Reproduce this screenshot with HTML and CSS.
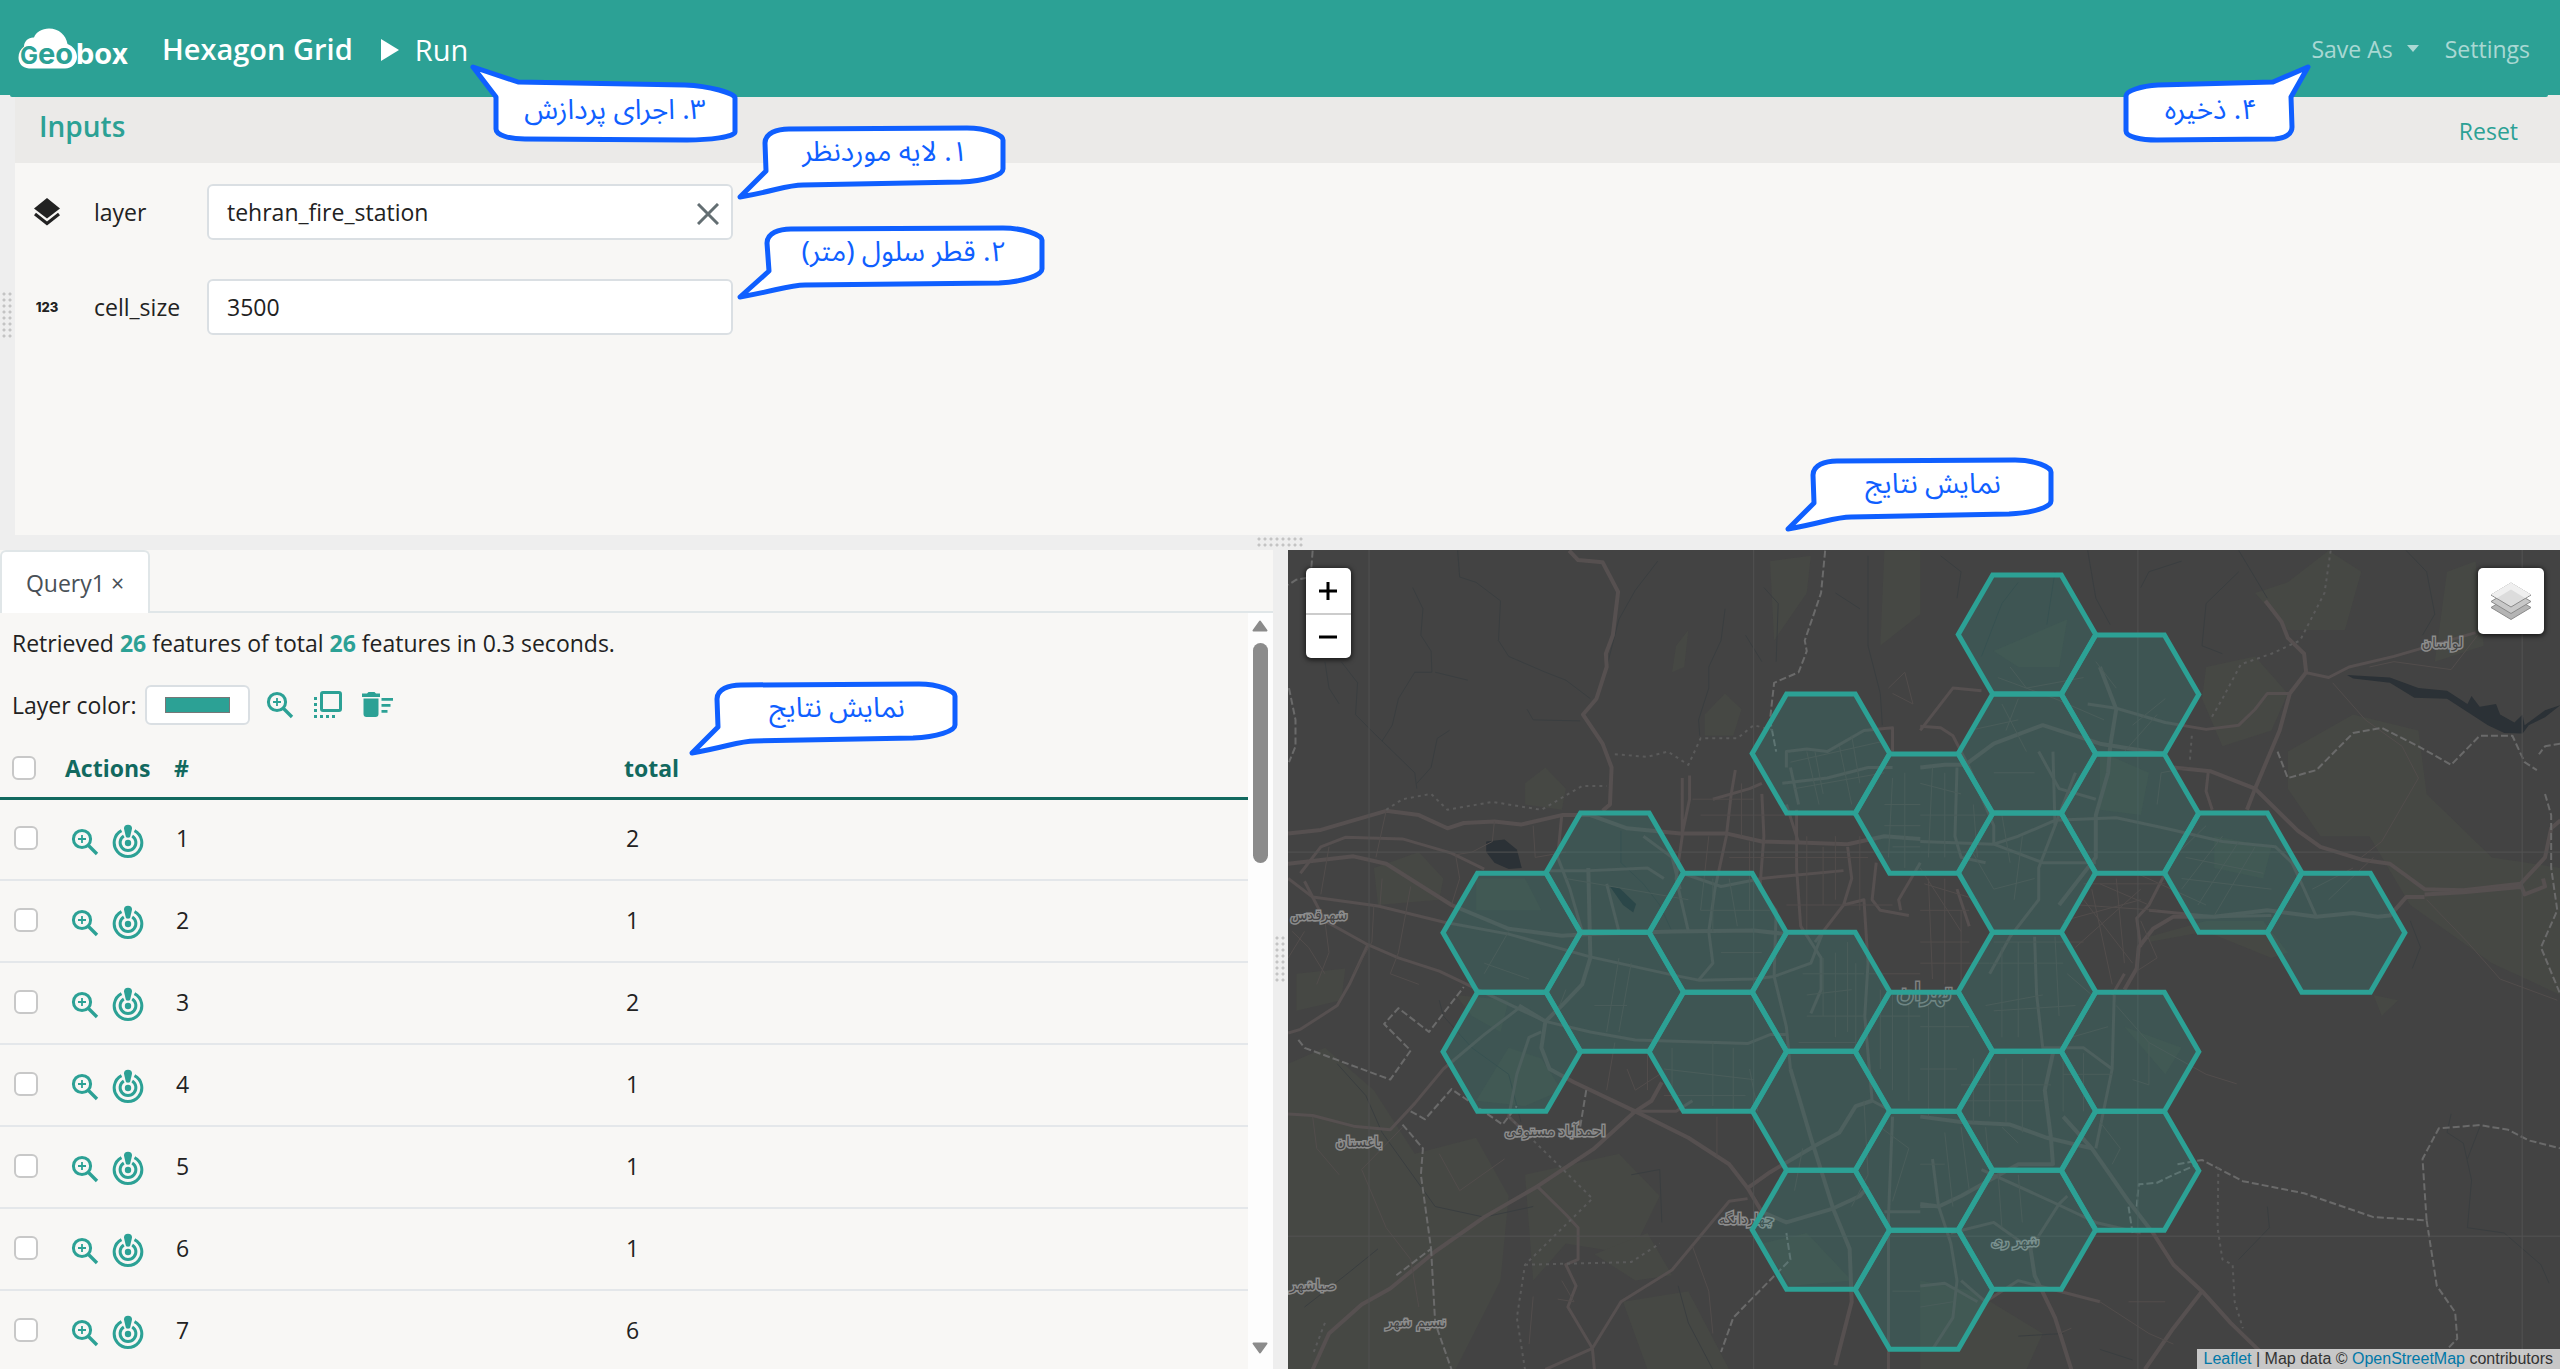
FILE: index.html
```html
<!DOCTYPE html>
<html lang="en">
<head>
<meta charset="utf-8">
<title>Hexagon Grid</title>
<link rel="stylesheet" href="styles.css">
</head>
<body>
<svg class="symbols" aria-hidden="true">
  <symbol id="zoom-in" viewBox="0 0 28 28">
    <g fill="none" stroke="currentColor"><circle cx="11" cy="11" r="8.6" stroke-width="3"/><path d="M17.5 17.5 26 26" stroke-width="3.4"/><path d="M11 7v8M7 11h8" stroke-width="1.8"/></g>
  </symbol>
  <symbol id="target" viewBox="0 0 32 36">
    <g fill="none" stroke="currentColor" stroke-width="3"><path d="M9.5 6.6A13.8 13.8 0 1 0 22.5 6.6"/><path d="M11.8 12A7.9 7.9 0 1 0 20.2 12"/></g>
    <circle cx="16" cy="19" r="3.2" fill="currentColor"/>
    <path d="M16 .8c2.600 0 4.200 1.600 4 4L18.200 12.500c-.5 1.600-3.900 1.600-4.400 0L12 4.800C11.800 2.400 13.400.8 16 .8z" fill="currentColor"/>
  </symbol>
</svg>

<header class="topbar">
  <svg class="logo" viewBox="0 0 112 42" role="img" aria-label="Geobox">
    <path fill="#fff" d="M11 40.500C4 40 .5 35 .5 29.500.5 25 2.500 21 6 18.500 6 13 11 9 16 9.500 18 4 24 .5 31 .5 41 .5 48 7 49.500 16 55 18 59 23 59 29 59 35 54 40.500 47 40.500z"/>
    <text class="logo-in" x="2" y="36"><tspan class="logo-cap">G</tspan>e<tspan>o</tspan></text>
    <text class="logo-out" x="58" y="36">box</text>
  </svg>
  <h1>Hexagon Grid</h1>
  <button class="run"><svg width="18" height="22" viewBox="0 0 18 22" aria-hidden="true"><path fill="#fff" d="M0 0 18 11 0 22z"/></svg>Run</button>
  <nav>
    <button class="save">Save As <span class="caret"></span></button>
    <a href="#settings">Settings</a>
  </nav>
</header>

<main>
  <section class="inputs">
    <div class="gutter side"><i class="grip tall"></i></div>
    <div class="inputs-panel">
      <div class="inputs-head"><h2>Inputs</h2><button>Reset</button></div>
      <form>
        <div class="field">
          <svg class="field-icon" viewBox="0 0 28 28" aria-hidden="true"><path fill="#222" d="M14 0 27 10.500 14 20.500 1 10.500z"/><path d="M2 16 14 25.500 26 16" fill="none" stroke="#222" stroke-width="3.200"/></svg>
          <label for="layer">layer</label>
          <div class="control">
            <input id="layer" type="text" value="tehran_fire_station">
            <button type="button" class="clear" aria-label="Clear"><svg width="22" height="22" viewBox="0 0 22 22"><path d="M1 1 21 21M21 1 1 21" stroke="#636e72" stroke-width="3"/></svg></button>
          </div>
        </div>
        <div class="field">
          <span class="field-icon digits">123</span>
          <label for="cell">cell_size</label>
          <div class="control"><input id="cell" type="text" value="3500"></div>
        </div>
      </form>
    </div>
  </section>
  <div class="gutter across"><i class="grip wide"></i></div>
  <section class="results">
    <div class="query">
      <div class="tabs"><button class="tab">Query1 <span>×</span></button></div>
      <div class="query-body">
        <div class="query-content">
          <p class="summary">Retrieved <b>26</b> features of total <b>26</b> features in 0.3 seconds.</p>
          <div class="tools">
            <label for="color">Layer color:</label>
            <input type="color" id="color" value="#2ca195">
            <button aria-label="Zoom to layer"><svg width="28" height="28"><use href="#zoom-in"/></svg></button>
            <button aria-label="Bring to front"><svg width="28" height="28" viewBox="0 0 28 28"><rect x="7.500" y="1.500" width="19" height="18" rx="1.500" fill="none" stroke="currentColor" stroke-width="3"/><path d="M1.500 6v21M0 25.500h23" fill="none" stroke="currentColor" stroke-width="3" stroke-dasharray="3 3"/></svg></button>
            <button aria-label="Clear results"><svg width="32" height="28" viewBox="0 0 32 28"><path fill="currentColor" d="M0 2.500h5L6.500 1h6L14 2.500h4V6H0zM1.500 7.500H16.500V23a3 3 0 0 1-3 3H4.500a3 3 0 0 1-3-3zM19.500 7H31v2.800H19.500zM19.500 13h9v2.800h-9zM19.500 19h6v2.800h-6z"/></svg></button>
          </div>
          <table>
            <colgroup><col class="c-check"><col class="c-actions"><col class="c-num"><col></colgroup>
            <thead><tr><th><input type="checkbox" aria-label="Select all"></th><th>Actions</th><th>#</th><th>total</th></tr></thead>
            <tbody>
              <tr><td><input type="checkbox" aria-label="Select 1"></td><td><button aria-label="Zoom"><svg width="28" height="28"><use href="#zoom-in"/></svg></button><button aria-label="Locate"><svg width="32" height="36"><use href="#target"/></svg></button></td><td>1</td><td>2</td></tr>
              <tr><td><input type="checkbox" aria-label="Select 2"></td><td><button aria-label="Zoom"><svg width="28" height="28"><use href="#zoom-in"/></svg></button><button aria-label="Locate"><svg width="32" height="36"><use href="#target"/></svg></button></td><td>2</td><td>1</td></tr>
              <tr><td><input type="checkbox" aria-label="Select 3"></td><td><button aria-label="Zoom"><svg width="28" height="28"><use href="#zoom-in"/></svg></button><button aria-label="Locate"><svg width="32" height="36"><use href="#target"/></svg></button></td><td>3</td><td>2</td></tr>
              <tr><td><input type="checkbox" aria-label="Select 4"></td><td><button aria-label="Zoom"><svg width="28" height="28"><use href="#zoom-in"/></svg></button><button aria-label="Locate"><svg width="32" height="36"><use href="#target"/></svg></button></td><td>4</td><td>1</td></tr>
              <tr><td><input type="checkbox" aria-label="Select 5"></td><td><button aria-label="Zoom"><svg width="28" height="28"><use href="#zoom-in"/></svg></button><button aria-label="Locate"><svg width="32" height="36"><use href="#target"/></svg></button></td><td>5</td><td>1</td></tr>
              <tr><td><input type="checkbox" aria-label="Select 6"></td><td><button aria-label="Zoom"><svg width="28" height="28"><use href="#zoom-in"/></svg></button><button aria-label="Locate"><svg width="32" height="36"><use href="#target"/></svg></button></td><td>6</td><td>1</td></tr>
              <tr><td><input type="checkbox" aria-label="Select 7"></td><td><button aria-label="Zoom"><svg width="28" height="28"><use href="#zoom-in"/></svg></button><button aria-label="Locate"><svg width="32" height="36"><use href="#target"/></svg></button></td><td>7</td><td>6</td></tr>
            </tbody>
          </table>
        </div>
        <div class="scrollbar" aria-hidden="true">
          <svg width="16" height="12" viewBox="0 0 16 12"><path d="M8 1.500 14.500 10.500h-13z" fill="#8b8b8b" stroke="#8b8b8b" stroke-width="2" stroke-linejoin="round"/></svg>
          <i class="thumb"></i>
          <svg width="16" height="12" viewBox="0 0 16 12"><path d="M8 10.500 1.500 1.500h13z" fill="#8b8b8b" stroke="#8b8b8b" stroke-width="2" stroke-linejoin="round"/></svg>
        </div>
      </div>
    </div>
    <div class="gutter between"><i class="grip tall"></i></div>
    <div class="map">
      <svg class="tiles" viewBox="0 0 1272 819" preserveAspectRatio="xMinYMin slice" role="img" aria-label="Map of Tehran">
        <defs><path id="grid-cell" d="M0 59.500 34.400 0H103L137.400 59.500 103 119H34.400z"/></defs>
        <rect width="1272" height="819" fill="#434343"/>
        <!-- west half -->
        <g class="geo" transform="matrix(.4082 0 0 .5288 -8 -10)">
          <g class="land">
            <path d="M20 990 110 960 230 1040 330 1160 480 1130 560 1240 540 1400 430 1568H20z"/>
            <path d="M230 620 340 590 400 640 390 680 240 690zM600 460 650 430 700 470 690 510 600 500zM1040 330 1090 290 1130 320 1110 370 1040 370zM970 200 1000 170 990 240 960 250z"/>
            <path d="M480 640 600 640 640 700 480 700zM430 860 560 870 540 930 470 900zM560 960 640 980 690 1040 600 1070 480 1060zM600 1200 830 1160 930 1240 860 1350 700 1330 620 1400zM1180 1330 1290 1310 1400 1400 1250 1410zM840 1440 1000 1420 1100 1568H900zM40 820 160 810 150 870 40 890z"/>
            <path d="M770 1350 900 1310 960 1390 870 1400zM1200 40 1300 30 1290 100 1210 190zM1480 20H1568V140L1470 200z"/>
          </g>
          <g class="water">
            <path d="M505 570 550 566 580 585 592 620 560 622 525 610 505 590z"/>
            <path d="M808 655 830 657 872 688 865 704 840 690z"/>
          </g>
          <g class="stream">
            <path d="M435 20 440 70 480 80 540 115 535 190 560 220 650 250 700 265 760 300M925 40 870 95 830 150 800 240M325 90 350 130 345 180 370 210 372 250 330 250 290 300 275 350 250 380M380 250 460 265M110 230 120 280 145 310M150 230 190 270 185 330 230 365 330 440 335 470M415 360 385 375 370 430 335 460M605 320 620 340 735 342M1090 130 1080 190 1050 240 1050 280 1025 340 1028 370M1140 180 1180 230M1185 90 1220 120 1215 230M1440 30 1440 200 1470 290 1475 350M1360 100 1420 130"/>
            <path d="M390 870 400 900 470 960 560 1010 590 1100M140 990 210 1050 250 1120 380 1260 500 1280 620 1260M860 1200 930 1190 935 1290M60 1450 160 1390 240 1340M835 550 835 610 890 650 930 690 960 740M975 1410 1000 1480 1060 1568"/>
          </g>
          <g class="road r5">
            <path d="M708 20 730 38 790 42 828 98 815 180 798 215 800 240 775 300 742 330 790 385 812 430 808 500 790 512"/>
            <path d="M20 612 180 598 260 612 420 690 560 735 690 748 760 745 960 740 1160 738 1240 745"/>
            <path d="M80 1568 120 1500 200 1445 270 1415 380 1345 500 1280 630 1222 770 1150 870 1080 910 1060 935 1025"/>
            <path d="M585 880 650 910 640 960 660 1000 720 1025 870 1080 1000 1130 1100 1180 1145 1225 1180 1270 1240 1290 1350 1265 1420 1240 1440 1222M755 620 760 790 740 840 690 880 650 910"/>
            <path d="M1145 1225 1200 1195 1310 1145 1370 1120 1410 1070 1450 1060M1250 1000 1300 1130 1355 1265 1395 1340 1400 1440 1360 1560"/>
            <path d="M20 555 100 548 180 530 260 512 340 520 410 545 450 535 525 532 590 538 690 520 760 520 850 545 980 555 1095 555 1180 570 1270 572 1390 575 1480 560 1568 565"/>
          </g>
          <g class="road r3">
            <path d="M20 640 80 675 240 692 400 722 560 745 760 788 960 822 1025 832 1160 830 1210 825 1300 800 1330 740"/>
            <path d="M50 630 100 580 160 562 300 565 420 592 500 622M60 645 110 720 215 765 290 790 390 815 485 850 650 910 760 930 870 945 1145 952 1200 935 1240 935"/>
            <path d="M20 932 50 925 140 880 170 840 215 765M20 1085 80 1088 180 1108 270 1115 330 1065 400 1000 500 935 585 885M985 450 985 560 970 640 1000 740M1003 445 1003 490 985 555M1115 435 1105 480 1093 560 1065 660 1050 740 1060 800 1025 832"/>
            <path d="M985 630 1080 655 1180 640 1240 635 1380 625M1180 480 1185 560 1175 660 1215 700 1210 825 1240 920 1250 1000M1265 510 1265 620 1275 730 1325 790 1325 850 1300 895M1390 580 1400 640 1380 690 1310 760M1240 500 1270 572M1380 690 1430 680 1440 800 1432 900 1450 1060 1500 1080"/>
            <path d="M630 1222 700 1275 730 1300 730 1360 700 1370 725 1410 705 1450 765 1528 770 1568M765 1528 835 1440 960 1380 1100 1250 1145 1245M765 1528 650 1568M860 1080 910 1080 970 1080 1010 1060M600 1120 560 1090 580 1010 610 940 640 930"/>
            <path d="M1240 430 1240 400 1290 395 1340 400 1430 360 1500 355 1500 400M1230 460 1340 450 1440 430 1500 430M1270 500 1250 430M1180 460 1150 470 1060 490M1520 700 1515 680 1568 610M1460 610 1450 680 1470 700 1540 710M1480 1270 1568 1270M1500 1090 1490 1280 1490 1568"/>
            <path d="M690 520 680 600 710 660 740 740M660 625 760 625 900 620 940 640M800 650 830 740M890 560 960 600 980 660"/>
          </g>
          <g class="road r1">
            <path d="M260 512 235 600M620 540 625 600 700 590M525 532 520 570 470 590 430 595 440 640 420 690M320 655 290 780M250 640 245 690M230 690 225 760 180 820M60 740 20 790M110 720 120 780 90 840M30 740 70 770 110 820M290 780 270 820 340 840M100 670 120 580"/>
            <path d="M1010 490H1160M1030 520H1250M1130 460V560M1150 570V700M1050 560 1030 700M1100 600H1260M1190 600H1440M1290 560V740M1330 580V690M1360 560V680M1240 690H1500M1420 560V700M1310 400 1330 480M1370 390 1400 500M1290 400 1320 500M1250 420 1480 380M1260 470 1480 440M1400 370 1420 460"/>
            <path d="M1060 640V740M1100 640 1120 730M1030 700H1200M1080 780H1180M1290 860 1400 850M1330 790V900M1360 780V940M1390 760V930M1410 800V960M1280 820H1430M1290 900H1430M1270 950H1410M1440 820H1568M1450 900H1568M1470 850V1000M1500 860V1040M1540 860V1060"/>
            <path d="M830 790 800 930M860 800 830 930M770 880H850M700 850 680 890M900 960V1040M940 1000 1160 1020M960 960V1060M1060 950V1070M1110 960V1080M940 1050H1140M820 950 800 1040M850 1000 870 1040 930 1010M1070 1090 1070 1165M1150 1000 1170 1080M620 1430 610 1520M1010 1335 1050 1420 1060 1500M680 1435 720 1440 690 1400"/>
            <path d="M80 1090 90 1150 145 1200M390 1160 440 1230 550 1170M300 1110 200 1190 260 1300 320 1360 340 1450M500 800 610 830M560 740 500 820M700 640 1000 680M1500 450 1490 600M1530 440V620M1480 500H1568M1480 540H1568M1500 580H1568M1490 280 1530 250 1550 310 1500 290M1470 1110 1540 1150 1500 1250M1500 1420H1568M1430 1060 1440 1200 1400 1260M1280 1150 1260 1230"/>
          </g>
          <g class="border">
            <path d="M80 20 75 70 40 75 20 85M22 280 38 340 38 390 22 420M1335 20 1325 100 1285 190 1290 210 1270 250 1210 270 1200 340 1215 400M45 945 60 960 270 1020 320 965 255 915 290 885 365 930 450 845M320 1080 355 1095 420 1038 545 1105 580 1070M300 1105 350 1150 345 1200 370 1340 285 1390M370 1340 380 1480 420 1568M750 1040 735 1110M1240 1310 1250 1360 1110 1470 1080 1535"/>
          </g>
          <g class="border dim">
            <path d="M260 510 300 490 370 480 410 510 520 495 640 510 740 465 800 465M820 405 900 410 950 400 1000 425 1030 375 1120 375 1160 350 1210 360M560 1090 680 1180 765 1245 600 1370 580 1470 600 1568M600 1370 860 1365 930 1330M110 1480 80 1540"/>
          </g>
          <path class="seam" d="M218 0V1568M1160 0V1568M0 590H1568M0 1316H1568"/>
        </g>
        <!-- east half -->
        <g class="geo" transform="matrix(.4082 0 0 .5288 632 -10)">
          <g class="land">
            <path d="M700 240 820 220 900 290 860 360 740 390 690 300zM820 100 900 170 1040 170 1080 60 1000 20 900 80zM900 400 1060 330 1220 360 1240 480 1400 600 1568 620V860L1400 800 1200 690 1100 560 980 560 900 470z"/>
            <path d="M1290 60 1360 40 1380 200 1260 230zM720 560 860 580 840 640 720 620zM560 750 700 720 840 720 900 780 860 790 700 740 560 760zM440 400 560 440 540 520 440 510zM1110 860 1170 870 1130 900zM0 1400 130 1420 300 1500 260 1568H0zM180 210 360 150 340 240 240 240zM500 920 640 960 600 1010z"/>
          </g>
          <path class="water" d="M1045 255 1150 260 1220 280 1290 285 1340 310 1350 295 1370 315 1410 310 1420 330 1455 345 1475 330 1480 350 1530 322 1568 312 1530 335 1490 350 1475 366 1430 365 1390 350 1340 325 1290 300 1210 298 1150 270 1060 262z"/>
          <g class="stream">
            <path d="M410 20 430 110 465 160M330 60 310 160M240 80 200 120 150 220M640 40 560 60 540 90M780 20 850 110M780 60 700 120 690 200 740 215M1190 20 1240 60 1260 140 1230 180M1300 1085 1290 1120 1330 1140 1350 1210 1340 1300 1430 1310 1520 1370 1540 1405M1370 1110 1340 1170M850 1260 855 1300 780 1360M1200 720 1225 770 1205 810M50 30 100 60 90 110M350 1500 240 1505M440 1530 520 1550"/>
          </g>
          <g class="road r5">
            <path d="M845 115 885 155 900 185 940 215 945 250 905 290 880 360 820 470 800 510"/>
            <path d="M620 430 710 437 820 470 925 550 980 580 1085 605 1150 612 1235 660 1330 662 1470 650 1530 600 1545 545 1568 530M1235 675 1190 675 1150 710 1120 712 1060 705 970 712 850 700 720 712 620 712 570 735 535 770 530 810 500 850"/>
            <path d="M1235 670 1330 666 1470 656M1470 650 1480 670 1530 655 1525 640"/>
            <path d="M0 430 60 425 110 425 180 385 300 350 440 385 600 405M440 240 480 320 465 390 460 440 430 520 430 600 340 690"/>
            <path d="M350 1090 420 1150 510 1250 570 1310 620 1370 690 1420 760 1480 840 1540M0 1090 100 1100 220 1105 310 1130 420 1150M325 970 305 1040 320 1130 325 1180 240 1180 100 1240 45 1260 0 1255"/>
            <path d="M270 1340 280 1390 330 1470 370 1568M690 1420 620 1490 550 1568"/>
          </g>
          <g class="road r3">
            <path d="M0 352 50 355 80 370 120 430 180 540 180 575 300 610 430 610M90 430 85 560 100 600 160 610M0 570 180 575 240 560 330 530 480 525 600 545 740 570 870 580 910 610 940 660 970 712M325 400 330 540 290 620 290 680 220 750 170 820"/>
            <path d="M410 310 480 318 600 345 700 358 780 350 820 320 850 290 905 290M705 440 700 475 715 510M940 250 1000 260 1050 240 1160 220 1360 175M380 440 330 540M600 630 560 690 530 715 540 770M470 860 500 820M475 860 470 1000 430 1150M280 750 285 860 300 960 400 960 470 1000M290 400 340 470 430 490"/>
            <path d="M0 1260 45 1260 75 1330 90 1400 80 1470 30 1530M75 1310 180 1290 270 1340 340 1255 360 1240M150 1190 320 1250 430 1290 540 1310M100 1400 160 1440 240 1400 440 1440M30 1170 45 1260M0 1410 60 1405 140 1440M560 700 720 712 860 710M90 660 120 730M0 360 80 280 150 285"/>
          </g>
          <g class="road r1">
            <path d="M190 260 330 300 450 340M200 310 260 400M220 240 260 280 400 260M430 230 480 280M520 350 600 300M500 400 580 330M120 360 240 340M180 440 280 440M240 300 210 360M0 460 100 480M30 430 20 600M60 440V600M0 520 160 520M130 500 140 600M120 580 180 660 280 640M200 520 220 610M250 560 230 680"/>
            <path d="M620 600 700 540M640 660 740 560M680 690 780 570M720 710 820 580M650 600 840 630M640 640 860 660M1000 680 1110 600M960 660 1060 620M580 500 590 440 660 430M350 720 540 680M380 770 540 660M400 680 520 800M420 660 470 840M440 650 560 690M480 640 500 800M400 650 600 650M390 690 580 700M540 720 580 790 530 815"/>
            <path d="M0 620 100 740M10 650 140 680M20 640 30 830M60 640V840M100 700V850M0 700H120M0 760H120M0 800H170M180 760H400M170 800H350M160 880 300 860M200 770V940M240 760V940M330 750 340 900M360 820 420 860M370 940 460 920M180 890 380 880"/>
            <path d="M20 880V1090M60 860V1080M0 920H120M0 1000H90M130 980V1100M170 970V1090M210 980V1100M250 980V1120M100 1030H320M110 1060H300M350 980V1080M400 970V1080M60 1120 80 1260M100 1110 120 1230M160 1110 170 1190M200 1110 240 1140M0 1180H60M190 1190 200 1300M240 1200 250 1290M350 1010H470M480 880 560 950 700 1010 775 1028M560 950V1030L520 1020M440 1100 490 1150 470 1180"/>
            <path d="M1100 240 1160 230 1300 245 1365 180M1010 270 1090 340 1180 390 1220 450 1130 570 1080 600M1240 680 1340 760 1420 830 1560 870M530 630 700 690M0 1450 80 1440M340 1500 370 1490M620 1520 560 1500 440 1440M510 1440 600 1440"/>
          </g>
          <g class="border">
            <path d="M875 400 900 450 970 435 1060 365 1130 355 1220 390 1300 425 1370 370 1450 370 1480 420 1510 435M1568 385 1530 390 1515 405M1530 480 1545 520 1545 620 1560 700 1520 770 1568 860M630 1180 690 1172 790 1212 940 1235 1110 1280 1240 1286 1230 1170 1270 1112 1370 1106 1440 1115 1490 1135 1568 1150M1240 1286 1265 1410 1310 1460 1315 1510 1290 1530M530 1260 535 1218 580 1215 620 1200 680 1180M510 1260 520 1310"/>
          </g>
          <g class="border dim">
            <path d="M1005 20 990 100 930 190 860 215 785 235 740 300 710 340M665 370 660 420M730 1185 728 1300 740 1360 765 1370 770 1440 790 1490"/>
          </g>
          <path class="seam" d="M533 0V1568M1474 0V1568M0 590H1568M0 1316H1568"/>
        </g>
        <g class="places">
          <text x="31" y="370">شهرقدس</text>
          <text x="267" y="586">احمدآباد مستوفی</text>
          <text x="71" y="597">باغستان</text>
          <text x="25" y="740">صباشهر</text>
          <text x="128" y="777">نسیم شهر</text>
          <text x="458" y="674">چهاردانگه</text>
          <text x="727" y="696">شهر ری</text>
          <text x="1154" y="98">لواسان</text>
          <text class="city" x="636" y="450">تهران</text>
        </g>
        <g class="cells">
          <g transform="translate(155 25)"><use href="#grid-cell" y="298"/><use href="#grid-cell" y="417"/></g>
          <g transform="translate(258 25)"><use href="#grid-cell" y="238"/><use href="#grid-cell" y="357"/></g>
          <g transform="translate(361 25)"><use href="#grid-cell" y="298"/><use href="#grid-cell" y="417"/></g>
          <g transform="translate(464 25)"><use href="#grid-cell" y="119"/><use href="#grid-cell" y="357"/><use href="#grid-cell" y="476"/><use href="#grid-cell" y="595"/></g>
          <g transform="translate(567 25)"><use href="#grid-cell" y="179"/><use href="#grid-cell" y="417"/><use href="#grid-cell" y="536"/><use href="#grid-cell" y="655"/></g>
          <g transform="translate(670 25)"><use href="#grid-cell"/><use href="#grid-cell" y="119"/><use href="#grid-cell" y="238"/><use href="#grid-cell" y="357"/><use href="#grid-cell" y="476"/><use href="#grid-cell" y="595"/></g>
          <g transform="translate(773 25)"><use href="#grid-cell" y="60"/><use href="#grid-cell" y="179"/><use href="#grid-cell" y="417"/><use href="#grid-cell" y="536"/></g>
          <g transform="translate(876 25)"><use href="#grid-cell" y="238"/></g>
          <g transform="translate(979 25)"><use href="#grid-cell" y="298"/></g>
        </g>
      </svg>
      <div class="zoom"><button aria-label="Zoom in"><svg width="18" height="18"><path d="M0 9h18M9 0v18" stroke="#000" stroke-width="3"/></svg></button><button aria-label="Zoom out"><svg width="18" height="18"><path d="M0 9h18" stroke="#000" stroke-width="3"/></svg></button></div>
      <button class="layers" aria-label="Layers"><svg width="42" height="40" viewBox="0 0 42 40"><g stroke-width="1"><path d="M1 26.500 21 38.500 41 26.500 21 14.500z" fill="#b4b4b4" stroke="#8a8a8a"/><path d="M1 20.500 21 32.500 41 20.500 21 8.500z" fill="#c8c8c8" stroke="#8a8a8a"/><path d="M1 14 21 26 41 14 21 2z" fill="#dcdcdc" stroke="#8a8a8a"/><path d="M1 13.500 21 1.500 41 13.500 35 17 21 8.500 7 17z" fill="#efefef"/></g></svg></button>
      <div class="credit"><a href="#leaflet">Leaflet</a> | Map data © <a href="#osm">OpenStreetMap</a> contributors</div>
    </div>
  </section>
</main>

<div class="callout c1" dir="rtl"><svg viewBox="0 0 272 80"><path d="M5 72 31 46 30 18C30 8 42 4 54 4L232 3C252 3 268 10 268 15V44C268 50 250 56 226 57L68 60C52 60 40 66 5 72z"/></svg><span>۱. لایه موردنظر</span></div>
<div class="callout c2" dir="rtl"><svg viewBox="0 0 310 80"><path d="M5 72 34 46 32 18C32 8 44 4 56 4L268 3C288 3 307 10 307 15V44C307 50 288 57 264 58L70 60C54 60 40 66 5 72z"/></svg><span>۲. قطر سلول (متر)</span></div>
<div class="callout c3" dir="rtl"><svg viewBox="0 0 272 80"><path d="M4 6 49 21 216 24C240 25 266 32 266 37V71C266 76 240 79 218 79L56 78C40 78 27 74 27 68V36z"/></svg><span>۳. اجرای پردازش</span></div>
<div class="callout c4" dir="rtl"><svg viewBox="0 0 192 80"><path d="M187 6 152 21 37 24C20 25 5 30 5 35V70C5 76 20 79 36 79L154 78C166 77 171 72 171 66L170 36z"/></svg><span>۴. ذخیره</span></div>
<div class="callout c5" dir="rtl"><svg viewBox="0 0 272 80"><path d="M5 72 31 46 30 18C30 8 42 4 54 4L232 3C252 3 268 10 268 15V44C268 50 250 56 226 57L68 60C52 60 40 66 5 72z"/></svg><span>نمایش نتایج</span></div>
<div class="callout c6" dir="rtl"><svg viewBox="0 0 272 80"><path d="M5 72 31 46 30 18C30 8 42 4 54 4L232 3C252 3 268 10 268 15V44C268 50 250 56 226 57L68 60C52 60 40 66 5 72z"/></svg><span>نمایش نتایج</span></div>
</body>
</html>
```

FILE: styles.css
```css
:root {
  --teal: #2ca195;
  --teal-dark: #12695f;
  --panel: #f8f7f5;
  --gutter: #eeeeee;
}

* { box-sizing: border-box; }

body {
  margin: 0;
  height: 100vh;
  position: relative;
  display: flex;
  flex-direction: column;
  overflow: hidden;
  background: var(--gutter);
  color: #222;
  font: 23px/32px "Open Sans", "Noto Sans", sans-serif;
}

button {
  margin: 0;
  padding: 0;
  border: 0;
  background: none;
  color: inherit;
  font: inherit;
}

svg { display: block; }
.symbols { position: absolute; width: 0; height: 0; }

/* Top bar */
.topbar {
  position: relative;
  z-index: 1;
  flex: none;
  display: flex;
  align-items: center;
  height: 95px;
  padding: 2px 30px 0 18px;
  background: var(--teal);
  color: #fff;
}
.topbar::after {
  content: "";
  position: absolute;
  left: 10px;
  right: 12px;
  top: 100%;
  height: 2px;
  border-radius: 0 0 4px 4px;
  background: var(--teal);
}
.logo { width: 112px; height: 42px; margin-right: 32px; }
.logo text { font: 700 29px "Inter", sans-serif; }
.logo-in { fill: var(--teal); }
.logo-out { fill: #fff; }
.logo .logo-cap { font-size: 24px; }
h1 { margin: 0 28px 0 0; font-size: 29px; font-weight: 600; line-height: 40px; }
.run { display: flex; align-items: center; gap: 16px; font-size: 29px; line-height: 40px; margin-top: 2px; }
nav { margin-left: auto; display: flex; gap: 26px; color: rgba(255, 255, 255, .6); }
nav a { color: inherit; text-decoration: none; }
.save { display: flex; align-items: center; gap: 14px; }
.caret { border: 6px solid transparent; border-top: 7px solid; border-bottom: 0; }

/* Panes */
main { flex: 1; min-height: 0; display: flex; flex-direction: column; }
.gutter { flex: none; display: flex; align-items: center; justify-content: center; background: var(--gutter); }
.side, .between { width: 15px; }
.across { height: 15px; }
.grip { background: radial-gradient(circle at 2px 2px, #c4c4c4 1px, transparent 2px) 0 0 / 6px 6px; }
.tall { width: 11px; height: 47px; }
.wide { width: 47px; height: 11px; }

.inputs { flex: none; height: 440px; display: flex; }
.inputs-panel { flex: 1; background: var(--panel); }
.inputs-head {
  display: flex;
  align-items: center;
  justify-content: space-between;
  height: 68px;
  padding: 0 42px 6px 24px;
  background: #ebeae8;
  color: var(--teal);
}
.inputs-head button { padding-top: 10px; }
h2 { margin: 0; font-size: 28px; font-weight: 600; line-height: 36px; }
form { display: grid; gap: 39px; padding: 21px 18px; }
.field { display: grid; grid-template-columns: 28px 146px 526px; align-items: center; }
.field label { padding-left: 33px; white-space: nowrap; }
.field-icon { width: 28px; height: 28px; }
.digits { font: 800 13px/28px "Inter", sans-serif; text-align: center; }
.control { position: relative; }
.control input {
  display: block;
  width: 100%;
  height: 56px;
  padding: 0 18px;
  border: 2px solid #dadfe3;
  border-radius: 6px;
  background: #fff;
  color: inherit;
  font: inherit;
}
.clear { position: absolute; right: 14px; top: 19px; }

/* Results */
.results { flex: 1; min-height: 0; display: flex; }
.query { flex: 1 1 0; min-width: 0; display: flex; flex-direction: column; background: var(--panel); }
.map { flex: 1 1 0; min-width: 0; position: relative; overflow: hidden; background: #434343; }
.tabs { flex: none; display: flex; height: 63px; border-bottom: 2px solid #e0e6e8; }
.tab {
  height: 63px;
  width: 150px;
  border: 2px solid #e0e6e8;
  border-bottom: 0;
  border-radius: 6px 6px 0 0;
  background: #fff;
  color: #495057;
}
.query-body { flex: 1; min-height: 0; display: flex; }
.query-content { flex: 1; overflow: hidden; }
.summary { margin: 0; padding: 14px 12px 0; }
.summary b { color: var(--teal); }
.tools { display: flex; align-items: center; height: 40px; margin: 26px 12px 0; color: var(--teal); }
.tools label { color: #222; width: 133px; white-space: nowrap; }
.tools button { margin-left: 20px; }
.tools input + button { margin-left: 16px; }
.tools input {
  width: 105px;
  height: 40px;
  padding: 6px 16px;
  border: 2px solid #dadfe3;
  border-radius: 6px;
  background: #fff;
}
table { width: 100%; border-collapse: collapse; table-layout: fixed; }
.c-check { width: 53px; }
.c-actions { width: 109px; }
.c-num { width: 450px; }
th {
  height: 73px;
  padding: 14px 0 0 12px;
  border-bottom: 3px solid var(--teal-dark);
  text-align: left;
  font-weight: 700;
  color: var(--teal-dark);
}
td { height: 82px; padding: 0 0 3px 14px; border-bottom: 2px solid #e4e7ea; }
td:nth-child(2) { padding: 4px 0 0 18px; color: var(--teal); white-space: nowrap; }
td button { vertical-align: middle; margin-right: 13px; }
td button:last-child { margin-right: 0; }
input[type="checkbox"] {
  appearance: none;
  display: block;
  width: 24px;
  height: 24px;
  margin: 0;
  border: 2px solid #c8c8c8;
  border-radius: 6px;
  background: #fff;
}
.scrollbar {
  flex: none;
  width: 25px;
  padding: 7px 0 15px;
  display: flex;
  flex-direction: column;
  align-items: center;
  background: #fdfdfd;
}
.thumb { width: 15px; height: 220px; margin: 11px 0 auto; border-radius: 8px; background: #8b8b8b; }

/* Map */
.tiles { width: 100%; height: 100%; }
.geo path { vector-effect: non-scaling-stroke; }
.land { fill: #464844; }
.water { fill: #2b3136; }
.stream, .road, .border, .seam { fill: none; stroke-linejoin: round; }
.stream { stroke: #3a3e40; stroke-width: 1px; }
.road { stroke: #565050; }
.r5 { stroke-width: 4px; }
.r3 { stroke-width: 3px; }
.r1 { stroke-width: 1px; stroke: #524d4c; }
.border { stroke: #6a6a6a; stroke-width: 2px; stroke-dasharray: 7 3; }
.dim { stroke: #5a5a5a; stroke-dasharray: 3 4; }
.seam { stroke: #525252; stroke-width: 1px; }
.places text {
  fill: #444;
  stroke: #8c8c8c;
  stroke-width: 3px;
  paint-order: stroke;
  text-anchor: middle;
  font: 14px "DejaVu Sans", sans-serif;
}
.places .city { font-size: 24px; stroke: #808080; }
.cells use { fill: rgba(44, 161, 149, .2); stroke: var(--teal); stroke-width: 5px; }
.zoom, .layers { position: absolute; top: 18px; background: #fff; border-radius: 5px; box-shadow: 0 1px 5px 1px rgba(0, 0, 0, .65); }
.zoom { left: 18px; width: 45px; }
.zoom button { display: grid; place-items: center; width: 45px; height: 45px; }
.zoom button + button { border-top: 2px solid #ccc; }
.layers { right: 16px; width: 66px; height: 66px; display: grid; place-items: center; }
.credit {
  position: absolute;
  right: 0;
  bottom: 0;
  padding: 0 7px;
  background: rgba(255, 255, 255, .7);
  color: #333;
  font: 16px/20px "Liberation Sans", sans-serif;
  white-space: nowrap;
}
.credit a { color: #0078a8; text-decoration: none; }

/* Annotation bubbles */
.callout { position: absolute; z-index: 2; width: 272px; height: 80px; color: #0f5fff; font: 28px/48px "Noto Sans Arabic", "Noto Sans", "DejaVu Sans", sans-serif; }
.callout svg { position: absolute; inset: 0; width: 100%; height: 100%; overflow: visible; }
.callout path { fill: #fff; stroke: currentColor; stroke-width: 5px; stroke-linejoin: round; }
.callout span { position: absolute; inset: 4px 0 auto 28px; text-align: center; white-space: nowrap; }
.c1 { left: 735px; top: 125px; }
.c2 { left: 735px; top: 225px; width: 310px; }
.c3 { left: 469px; top: 61px; }
.c4 { right: 247px; top: 61px; width: 192px; }
.c5 { left: 1783px; top: 457px; }
.c6 { left: 687px; top: 681px; }
.c3 span, .c4 span { top: 26px; }
.c3 span { right: 8px; }
.c4 span { left: 0; right: 12px; }
```
